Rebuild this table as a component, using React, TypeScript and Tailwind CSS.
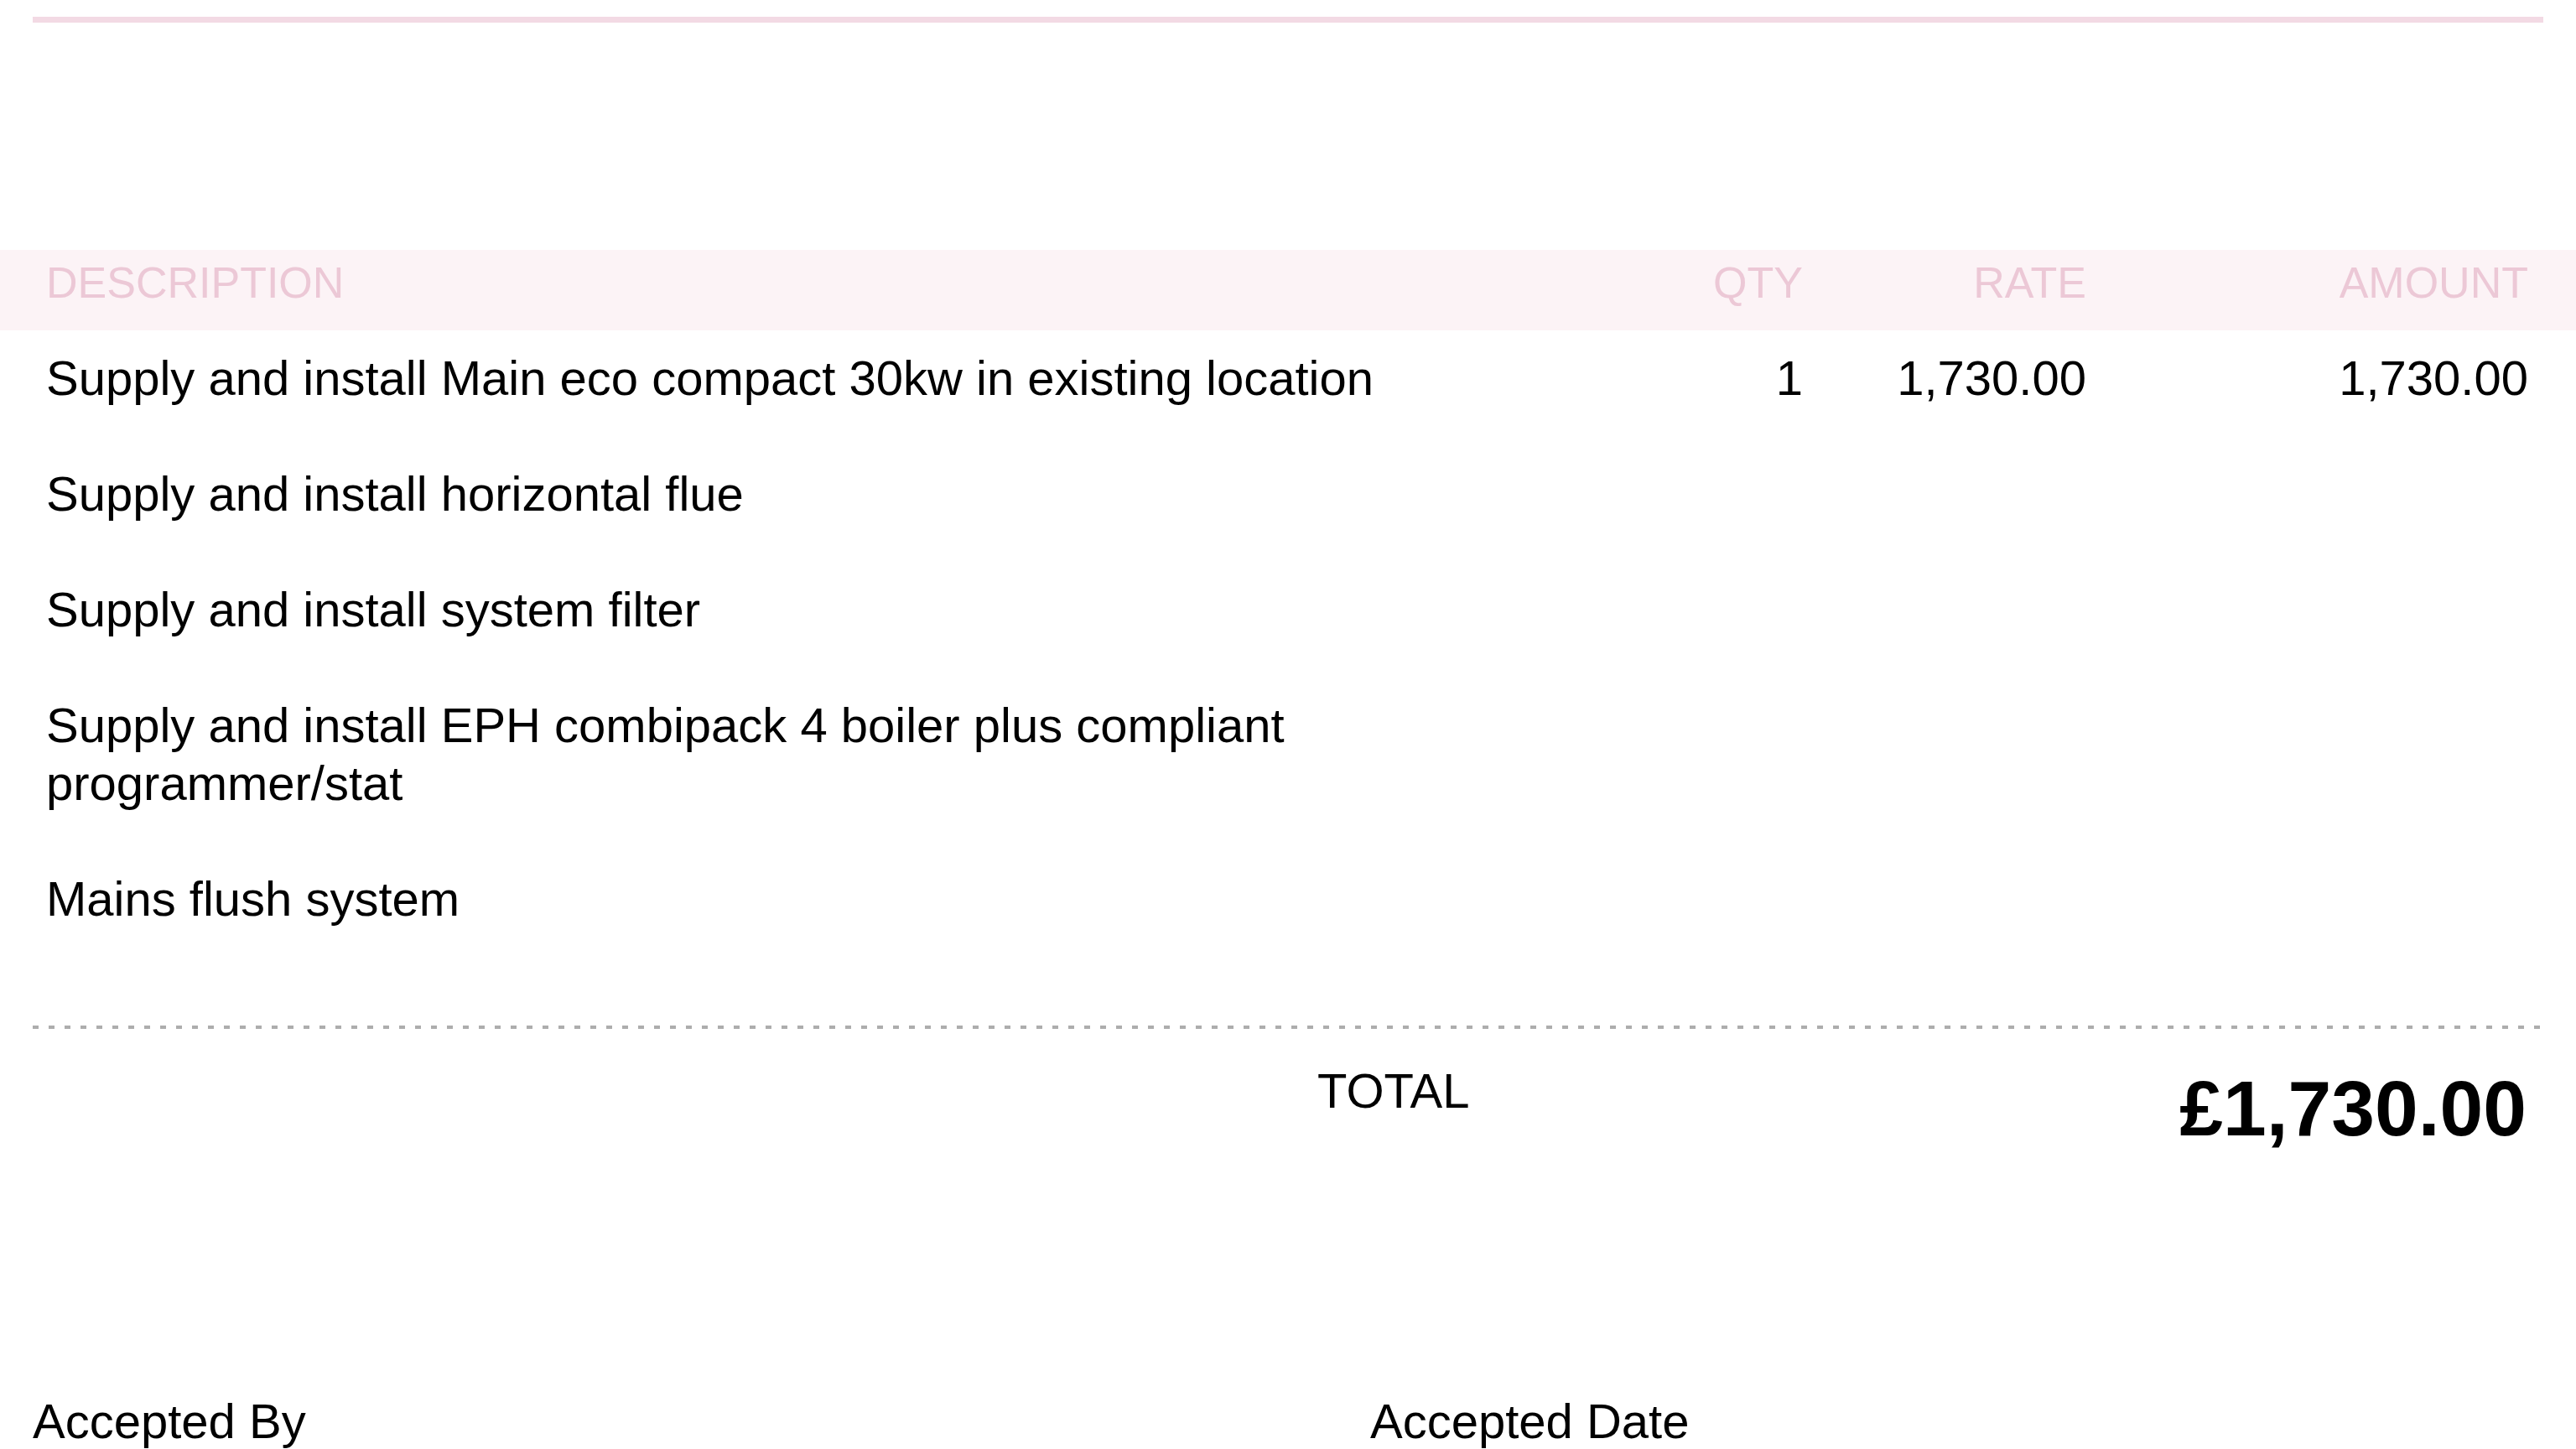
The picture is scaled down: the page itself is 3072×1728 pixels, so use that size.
import React from "react";

const rows = [
  { desc: "Supply and install Main eco compact 30kw in existing location", qty: "1", rate: "1,730.00", amount: "1,730.00" },
  { desc: "Supply and install horizontal flue", qty: "", rate: "", amount: "" },
  { desc: "Supply and install system filter", qty: "", rate: "", amount: "" },
  { desc: "Supply and install EPH combipack 4 boiler plus compliant programmer/stat", qty: "", rate: "", amount: "" },
  { desc: "Mains flush system", qty: "", rate: "", amount: "" },
];

export default function App() {
  return (
    <div className="w-[3072px] h-[1728px] overflow-hidden bg-white text-black font-['Liberation_Sans',Arial,Helvetica,sans-serif]">
      <div className="pt-[20px] px-[39px]">
        <div className="h-[7px] bg-[#f3dae4]" />
      </div>

      <div className="mt-[271px]">
        <div className="h-[96px] bg-[#fcf3f6] pt-[10px] pl-[55px] pr-[57px] grid grid-cols-[1700px_395px_338px_527px] text-[52px] leading-[58px] text-[#ecc8d6]">
          <div>DESCRIPTION</div>
          <div className="text-right">QTY</div>
          <div className="text-right">RATE</div>
          <div className="text-right">AMOUNT</div>
        </div>

        <div className="pl-[55px] pr-[57px] text-[58px] leading-[69px]">
          {rows.map((r, i) => (
            <div key={i} className="grid grid-cols-[1700px_395px_338px_527px] pt-[22px] pb-[47px]">
              <div>{r.desc}</div>
              <div className="text-right">{r.qty}</div>
              <div className="text-right">{r.rate}</div>
              <div className="text-right">{r.amount}</div>
            </div>
          ))}
        </div>
      </div>

      <div className="px-[39px] mt-[70px]">
        <div className="h-[4px] bg-[repeating-linear-gradient(90deg,#adadad_0px,#adadad_7px,transparent_7px,transparent_19px)]" />
      </div>

      <div className="mt-[39px] pl-[39px] pr-[59px] grid grid-cols-[1532px_1fr] items-start">
        <div />
        <div className="flex items-start justify-between">
          <div className="text-[58px] leading-[69px]">TOTAL</div>
          <div className="mt-[9px] text-[93px] leading-[94px] font-bold">£1,730.00</div>
        </div>
      </div>

      <div className="mt-[291px] pl-[39px] grid grid-cols-[1595px_1fr] text-[58px] leading-[69px]">
        <div>Accepted By</div>
        <div>Accepted Date</div>
      </div>
    </div>
  );
}
